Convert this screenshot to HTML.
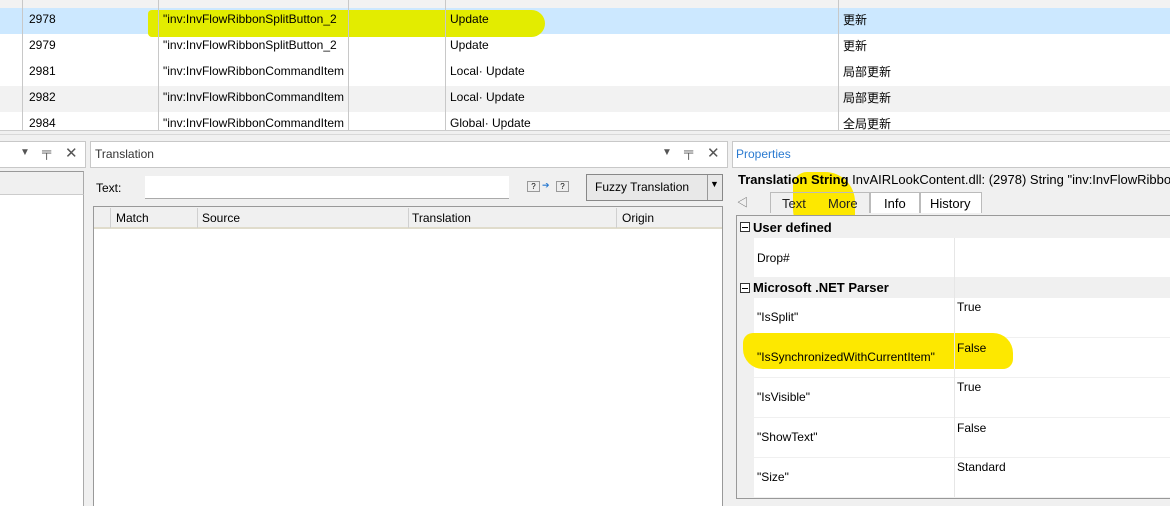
<!DOCTYPE html>
<html><head><meta charset="utf-8"><style>
*{margin:0;padding:0;box-sizing:border-box}
body{width:1170px;height:506px;overflow:hidden;background:#f0f0f0;font-family:"Liberation Sans","Noto Sans CJK SC",sans-serif;font-size:12px;color:#000;position:relative}
.a{position:absolute}
.t{position:absolute;white-space:nowrap}
.c{position:absolute;white-space:nowrap;overflow:hidden}
.vl{position:absolute;width:1px;background:#c8c8c8}
.hl{position:absolute;height:1px;background:#d0d0d0}
.yl{position:absolute;background:#e3ec00;border-radius:6px}
.y2{position:absolute;background:#fde800;border-radius:10px}
</style></head><body>
<div class="a" style="left:0;top:0;width:1170px;height:130px;background:#fff"></div>
<div class="a" style="left:0;top:0;width:1170px;height:8px;background:#f2f2f2"></div>
<div class="a" style="left:0;top:8px;width:1170px;height:26px;background:#cce8ff"></div>
<div class="a" style="left:0;top:86px;width:1170px;height:26px;background:#f2f2f2"></div>
<div class="yl" style="left:148px;top:10px;width:397px;height:27px;border-radius:4px 14px 14px 4px"></div>
<div class="vl" style="left:22px;top:0;height:130px"></div>
<div class="vl" style="left:158px;top:0;height:130px"></div>
<div class="vl" style="left:348px;top:0;height:130px"></div>
<div class="vl" style="left:445px;top:0;height:130px"></div>
<div class="vl" style="left:838px;top:0;height:130px"></div>
<div class="t" style="left:29px;top:12px">2978</div><div class="c" style="left:163px;top:12px;width:182px">"inv:InvFlowRibbonSplitButton_2</div><div class="t" style="left:450px;top:12px">Update</div><div class="t" style="left:843px;top:11px">更新</div>
<div class="t" style="left:29px;top:38px">2979</div><div class="c" style="left:163px;top:38px;width:182px">"inv:InvFlowRibbonSplitButton_2</div><div class="t" style="left:450px;top:38px">Update</div><div class="t" style="left:843px;top:37px">更新</div>
<div class="t" style="left:29px;top:64px">2981</div><div class="c" style="left:163px;top:64px;width:182px">"inv:InvFlowRibbonCommandItem</div><div class="t" style="left:450px;top:64px">Local· Update</div><div class="t" style="left:843px;top:63px">局部更新</div>
<div class="t" style="left:29px;top:90px">2982</div><div class="c" style="left:163px;top:90px;width:182px">"inv:InvFlowRibbonCommandItem</div><div class="t" style="left:450px;top:90px">Local· Update</div><div class="t" style="left:843px;top:89px">局部更新</div>
<div class="t" style="left:29px;top:116px">2984</div><div class="c" style="left:163px;top:116px;width:182px">"inv:InvFlowRibbonCommandItem</div><div class="t" style="left:450px;top:116px">Global· Update</div><div class="t" style="left:843px;top:115px">全局更新</div>
<div class="hl" style="left:0;top:130px;width:1170px;background:#ccc"></div>
<div class="hl" style="left:0;top:134px;width:1170px;background:#d8d8d8"></div>

<div class="a" style="left:0;top:141px;width:86px;height:27px;border:1px solid #c8c8c8;border-left:0;background:#fff"></div>
<div class="t" style="left:20px;top:147px;font-size:10px;color:#555">▼</div>
<div class="t" style="left:42px;top:144px;font-size:13px;color:#555">╤</div>
<div class="t" style="left:65px;top:144px;font-size:15px;color:#555">✕</div>
<div class="a" style="left:0;top:171px;width:84px;height:335px;border-top:1px solid #999;border-right:1px solid #aaa;background:#f0f0f0"></div>
<div class="a" style="left:0;top:194px;width:84px;height:312px;background:#fff;border-top:1px solid #ccc;border-right:1px solid #aaa"></div>

<div class="a" style="left:90px;top:141px;width:638px;height:27px;border:1px solid #c8c8c8;background:#fff"></div>
<div class="t" style="left:95px;top:147px;color:#333">Translation</div>
<div class="t" style="left:662px;top:147px;font-size:10px;color:#555">▼</div>
<div class="t" style="left:684px;top:144px;font-size:13px;color:#555">╤</div>
<div class="t" style="left:707px;top:144px;font-size:15px;color:#555">✕</div>
<div class="t" style="left:96px;top:181px">Text:</div>
<div class="a" style="left:145px;top:176px;width:364px;height:23px;background:#fff;border-bottom:1px solid #aaa"></div>
<div class="a" style="left:527px;top:181px;width:13px;height:11px;border:1px solid #999;background:#eee;font-size:8px;text-align:center;line-height:9px">?</div>
<div class="t" style="left:542px;top:180px;font-size:9px;color:#2a7ad0">➔</div>
<div class="a" style="left:556px;top:181px;width:13px;height:11px;border:1px solid #999;background:#eee;font-size:8px;text-align:center;line-height:9px">?</div>
<div class="a" style="left:586px;top:174px;width:137px;height:27px;border:1px solid #888;background:#e8e8e8"></div>
<div class="t" style="left:595px;top:180px">Fuzzy Translation</div>
<div class="vl" style="left:707px;top:175px;height:25px;background:#999"></div>
<div class="t" style="left:710px;top:179px;font-size:9px">▼</div>
<div class="a" style="left:93px;top:206px;width:630px;height:300px;background:#fff;border:1px solid #999;border-bottom:0"></div>
<div class="a" style="left:94px;top:207px;width:628px;height:22px;background:#f0f0f0;border-bottom:2px solid #e0dccc"></div>
<div class="vl" style="left:110px;top:208px;height:20px;background:#d0d0d0"></div>
<div class="vl" style="left:197px;top:208px;height:20px;background:#d0d0d0"></div>
<div class="vl" style="left:408px;top:208px;height:20px;background:#d0d0d0"></div>
<div class="vl" style="left:616px;top:208px;height:20px;background:#d0d0d0"></div>
<div class="t" style="left:116px;top:211px">Match</div>
<div class="t" style="left:202px;top:211px">Source</div>
<div class="t" style="left:412px;top:211px">Translation</div>
<div class="t" style="left:622px;top:211px">Origin</div>

<div class="a" style="left:732px;top:141px;width:440px;height:27px;border:1px solid #c8c8c8;background:#fff"></div>
<div class="t" style="left:736px;top:147px;color:#2a7ad0">Properties</div>
<div class="y2" style="left:793px;top:172px;width:62px;height:58px;border-radius:14px 30px 14px 20px"></div>
<div class="c" style="left:738px;top:172px;width:432px;font-size:13px"><b>Translation String</b> InvAIRLookContent.dll: (2978) String "inv:InvFlowRibbonSplitButton</div>
<div class="t" style="left:737px;top:194px;font-size:11px;color:#666">◁</div>
<div class="a" style="left:770px;top:192px;width:100px;height:21px;border:1px solid #bbb;border-bottom:0"></div>
<div class="t" style="left:782px;top:196px;font-size:13px;color:#222">Text</div>
<div class="t" style="left:828px;top:196px;font-size:13px;color:#222">More</div>
<div class="a" style="left:870px;top:192px;width:50px;height:21px;border:1px solid #bbb;border-bottom:0;background:#fff"></div>
<div class="t" style="left:884px;top:196px;font-size:13px">Info</div>
<div class="a" style="left:920px;top:192px;width:62px;height:21px;border:1px solid #bbb;border-bottom:0;background:#fff"></div>
<div class="t" style="left:930px;top:196px;font-size:13px">History</div>
<div class="a" style="left:736px;top:215px;width:436px;height:284px;border:1px solid #999;background:#f0f0f0"></div>
<div class="a" style="left:740px;top:222px;width:10px;height:10px;border:1px solid #333;background:#fff"></div><div class="a" style="left:742px;top:227px;width:6px;height:1px;background:#000"></div>
<div class="t" style="left:753px;top:220px;font-weight:bold;font-size:13px">User defined</div>
<div class="a" style="left:754px;top:238px;width:416px;height:39px;background:#fff"></div>
<div class="t" style="left:757px;top:251px">Drop#</div>
<div class="a" style="left:740px;top:283px;width:10px;height:10px;border:1px solid #333;background:#fff"></div><div class="a" style="left:742px;top:288px;width:6px;height:1px;background:#000"></div>
<div class="t" style="left:753px;top:280px;font-weight:bold;font-size:13px">Microsoft .NET Parser</div>
<div class="a" style="left:754px;top:298px;width:416px;height:39px;background:#fff"></div>
<div class="a" style="left:754px;top:338px;width:416px;height:39px;background:#fff"></div>
<div class="a" style="left:754px;top:378px;width:416px;height:39px;background:#fff"></div>
<div class="a" style="left:754px;top:418px;width:416px;height:39px;background:#fff"></div>
<div class="a" style="left:754px;top:458px;width:416px;height:39px;background:#fff"></div>
<div class="y2" style="left:743px;top:333px;width:270px;height:36px;border-radius:10px 20px 10px 20px"></div>
<div class="vl" style="left:954px;top:238px;height:259px;background:#e6e6e6"></div>
<div class="t" style="left:757px;top:310px">"IsSplit"</div><div class="t" style="left:957px;top:300px">True</div>
<div class="t" style="left:757px;top:350px">"IsSynchronizedWithCurrentItem"</div><div class="t" style="left:957px;top:341px">False</div>
<div class="t" style="left:757px;top:390px">"IsVisible"</div><div class="t" style="left:957px;top:380px">True</div>
<div class="t" style="left:757px;top:430px">"ShowText"</div><div class="t" style="left:957px;top:421px">False</div>
<div class="t" style="left:757px;top:470px">"Size"</div><div class="t" style="left:957px;top:460px">Standard</div>
</body></html>
